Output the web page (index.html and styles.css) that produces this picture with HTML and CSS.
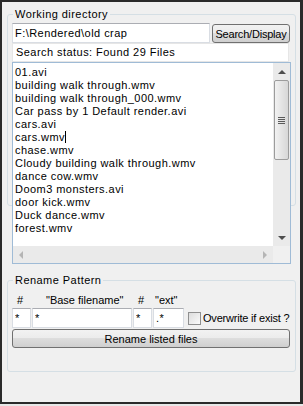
FILE: index.html
```html
<!DOCTYPE html>
<html lang="en">
<head>
    <meta charset="UTF-8">
    <title>Rename Files</title>
    <link rel="stylesheet" href="styles.css">
</head>
<body>
    <div class="window">
        <fieldset class="group group-dir">
            <legend>Working directory</legend>
            <div class="path-row">
                <input class="textbox path-input" type="text" value="F:\Rendered\old crap">
                <button class="btn search-btn">Search/Display</button>
            </div>
            <div class="status">Search status: Found 29 Files</div>
            <div class="filebox">
                <div class="file-list">
                    <div>01.avi</div>
                    <div>building walk through.wmv</div>
                    <div>building walk through_000.wmv</div>
                    <div>Car pass by 1 Default render.avi</div>
                    <div>cars.avi</div>
                    <div>cars.wmv<span class="caret"></span></div>
                    <div>chase.wmv</div>
                    <div>Cloudy building walk through.wmv</div>
                    <div>dance cow.wmv</div>
                    <div>Doom3 monsters.avi</div>
                    <div>door kick.wmv</div>
                    <div>Duck dance.wmv</div>
                    <div>forest.wmv</div>
                </div>
                <div class="vscroll">
                    <span class="arrow arrow-up"></span>
                    <span class="thumb"><span class="grip"></span></span>
                    <span class="arrow arrow-down"></span>
                </div>
                <div class="hscroll">
                    <span class="arrow arrow-left"></span>
                    <span class="arrow arrow-right"></span>
                </div>
                <div class="corner"></div>
            </div>
        </fieldset>

        <fieldset class="group group-rename">
            <legend>Rename Pattern</legend>
            <div class="pattern-grid">
                <span class="col-label num-label">#</span>
                <span class="col-label base-label">"Base filename"</span>
                <span class="col-label num-label">#</span>
                <span class="col-label ext-label">"ext"</span>
                <span></span>

                <input class="textbox small-input" type="text" value="*">
                <input class="textbox small-input" type="text" value="*">
                <input class="textbox small-input" type="text" value="*">
                <input class="textbox small-input" type="text" value=".*">
                <label class="overwrite"><span class="checkbox"></span>Overwrite if exist ?</label>
            </div>
            <button class="btn rename-btn">Rename listed files</button>
        </fieldset>
    </div>
</body>
</html>
```

FILE: styles.css
```css
* {
    box-sizing: border-box;
}
body {
    margin: 0;
    background: #e8e8e8;
    font-family: "Liberation Sans", Arial, sans-serif;
    font-size: 11px;
    letter-spacing: 0.45px;
    color: #000;
}
.window {
    width: 303px;
    height: 404px;
    background: #f0f0f0;
    border: 2px solid #2a2a2a;
    border-right-width: 3px;
    padding: 6px 0 0 5px;
}
.group {
    margin: 0;
    width: 289px;
    min-width: 0;
    padding: 2px 4px 0 4px;
    border: 1px solid #d5dfe5;
    border-radius: 3px;
}
.group legend {
    margin-left: 1px;
    padding: 0 2px;
    line-height: 13px;
}
.group-dir {
    height: 198px;
}
.group-rename {
    margin-top: 68px;
    height: 98px;
    padding-top: 7px;
}
.textbox {
    font: inherit;
    letter-spacing: inherit;
    margin: 0;
    height: 20px;
    padding: 0 2px;
    border: 1px solid #d9dde3;
    border-top-color: #abadb3;
    background: #fff;
    outline: none;
}
.path-row {
    display: flex;
    gap: 2px;
    align-items: flex-start;
}
.path-input {
    width: 198px;
}
.btn {
    font: inherit;
    letter-spacing: 0;
    margin: 0;
    padding: 0;
    border: 1px solid #707070;
    border-radius: 3px;
    background: linear-gradient(#f2f2f2 0%, #ebebeb 50%, #dddddd 50%, #cfcfcf 100%);
    color: #000;
    white-space: nowrap;
}
.search-btn {
    width: 78px;
    height: 19px;
    margin-top: 1px;
    letter-spacing: -0.2px;
}
.status {
    width: 277px;
    height: 19px;
    line-height: 17px;
    padding: 0 3px;
    background: #fff;
    border: 1px solid #e6e6e6;
}
.filebox {
    width: 279px;
    height: 202px;
    border: 1px solid #9fbbd6;
    background: #fff;
    display: grid;
    grid-template-columns: 1fr 17px;
    grid-template-rows: 1fr 17px;
}
.file-list {
    padding: 3px 0 0 2px;
    line-height: 13px;
    overflow: hidden;
    white-space: nowrap;
}
.caret {
    display: inline-block;
    width: 1px;
    height: 12px;
    background: #000;
    vertical-align: -2px;
}
.vscroll {
    background: #eaeaea;
    display: flex;
    flex-direction: column;
    align-items: center;
    padding: 0 1px;
}
.hscroll {
    background: #eaeaea;
    display: flex;
    justify-content: space-between;
    align-items: center;
    padding: 0 6px;
}
.corner {
    background: #f0f0f0;
}
.arrow {
    width: 0;
    height: 0;
    border: 4px solid transparent;
}
.arrow-up {
    border-bottom-color: #4d4d4d;
    border-top-width: 0;
    margin: 7px 0 6px;
}
.arrow-down {
    margin-top: auto;
    margin-bottom: 6px;
    border-top-color: #4d4d4d;
    border-bottom-width: 0;
}
.arrow-left {
    border-right-color: #b5b5b5;
    border-left-width: 0;
}
.arrow-right {
    border-left-color: #b5b5b5;
    border-right-width: 0;
}
.thumb {
    width: 15px;
    height: 80px;
    border: 1px solid #9c9c9c;
    border-radius: 2px;
    background: linear-gradient(90deg, #f2f2f2, #e4e4e4 50%, #d7d7d7);
    display: flex;
    align-items: center;
    justify-content: center;
}
.grip {
    width: 7px;
    height: 7px;
    background: repeating-linear-gradient(#5a5a5a 0 1px, transparent 1px 2px);
}
.pattern-grid {
    display: grid;
    grid-template-columns: 19px 100px 19px 31px auto;
    column-gap: 1px;
    row-gap: 1px;
    align-items: center;
}
.col-label {
    line-height: 13px;
    white-space: nowrap;
    letter-spacing: 0;
}
.num-label {
    padding-left: 5px;
}
.base-label {
    padding-left: 14px;
}
.ext-label {
    padding-left: 2px;
}
.small-input {
    width: 100%;
}
.overwrite {
    display: flex;
    align-items: center;
    gap: 2px;
    padding-left: 3px;
    white-space: nowrap;
    letter-spacing: -0.2px;
}
.checkbox {
    flex: none;
    width: 13px;
    height: 13px;
    border: 1px solid #8f8f8f;
    background: linear-gradient(135deg, #dcdcdc, #fafafa);
}
.rename-btn {
    display: block;
    width: 278px;
    height: 19px;
    margin-top: 1px;
}
```
